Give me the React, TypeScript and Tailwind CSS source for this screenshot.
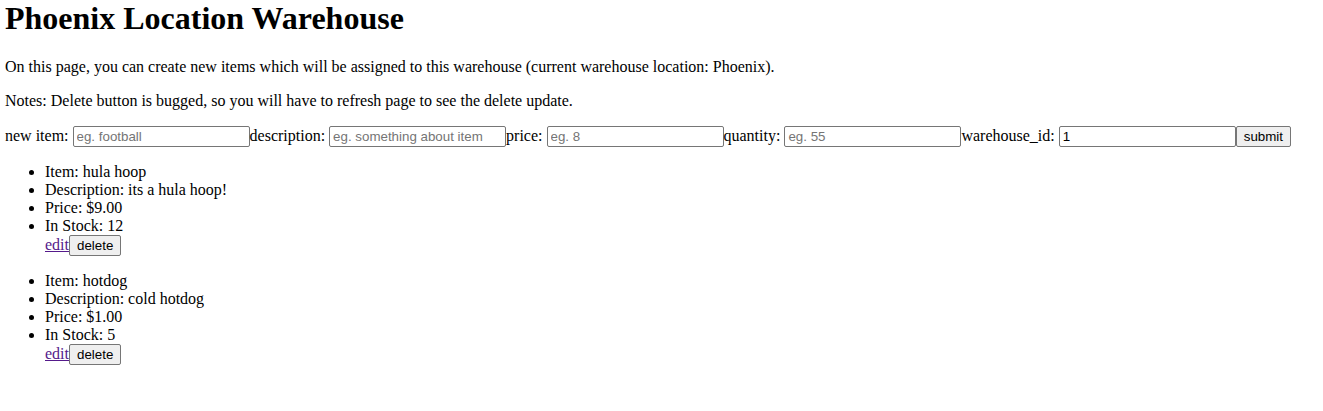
type Item = {
  name: string;
  description: string;
  price: string;
  stock: number;
};

const items: Item[] = [
  { name: "hula hoop", description: "its a hula hoop!", price: "$9.00", stock: 12 },
  { name: "hotdog", description: "cold hotdog", price: "$1.00", stock: 5 },
];

const inputClass =
  "w-[177px] h-[21px] border border-[#767676] rounded-[2px] px-[3px] py-[1px] align-baseline text-[13.33px] leading-[15px] text-black placeholder:text-[#757575] bg-white [font-family:'Liberation_Sans',Arial,sans-serif]";

const buttonClass =
  "h-[21px] border border-[#767676] rounded-[2px] bg-[#efefef] px-[7px] py-[1px] align-baseline text-[13.33px] leading-[15px] text-black [font-family:'Liberation_Sans',Arial,sans-serif]";

const App = () => {
  return (
    <div className="min-h-screen bg-white px-[5px] text-[16px] leading-[18px] text-black [font-family:'Liberation_Serif','Times_New_Roman',serif]">
      {/* HEADER */}
      <h1 className="mb-[21px] text-[32px] leading-[37px] font-bold">
        Phoenix Location Warehouse
      </h1>
      <p className="mb-[16px]">
        On this page, you can create new items which will be assigned to this
        warehouse (current warehouse location: Phoenix).
      </p>
      <p className="mb-[16px]">
        Notes: Delete button is bugged, so you will have to refresh page to see
        the delete update.
      </p>

      {/* NEW ITEM FORM */}
      <form className="whitespace-nowrap" onSubmit={(e) => e.preventDefault()}>
        new item: <input className={inputClass} placeholder="eg. football" />
        description:{" "}
        <input className={inputClass} placeholder="eg. something about item" />
        price: <input className={inputClass} placeholder="eg. 8" />
        quantity: <input className={inputClass} placeholder="eg. 55" />
        warehouse_id: <input className={inputClass} defaultValue="1" />
        <button type="submit" className={buttonClass}>
          submit
        </button>
      </form>

      {/* ITEMS */}
      {items.map((item) => (
        <ul key={item.name} className="my-[16px] list-disc pl-[40px]">
          <li>Item: {item.name}</li>
          <li>Description: {item.description}</li>
          <li>Price: {item.price}</li>
          <li>In Stock: {item.stock}</li>
          <div>
            <a href="#" className="text-[#551a8b] underline">
              edit
            </a>
            <button className={buttonClass}>delete</button>
          </div>
        </ul>
      ))}
    </div>
  );
};

export default App;
